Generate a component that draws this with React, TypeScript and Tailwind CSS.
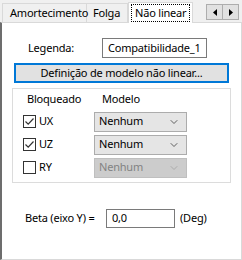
import { ChevronDown } from "lucide-react";

function Check({ checked }: { checked: boolean }) {
  return (
    <span className="w-[13px] h-[13px] border border-[#333333] bg-white flex items-center justify-center">
      {checked && (
        <svg width="11" height="11" viewBox="0 0 11 11">
          <path d="M1.5 5.5 L4.2 8.2 L9.5 2.5" fill="none" stroke="#333" strokeWidth="1.2" />
        </svg>
      )}
    </span>
  );
}

function Select({ disabled }: { disabled?: boolean }) {
  return (
    <div
      className={`w-[93px] h-[20px] border flex items-center justify-between pl-[4px] pr-[6px] ${
        disabled ? "bg-[#cccccc] border-[#bfbfbf] text-[#838383]" : "bg-[#e5e5e5] border-[#acacac] text-black"
      }`}
    >
      <span>Nenhum</span>
      <ChevronDown className={`w-[12px] h-[12px] ${disabled ? "text-[#a0a0a0]" : "text-[#333]"}`} strokeWidth={1.5} />
    </div>
  );
}

function Row({ label, checked, disabled }: { label: string; checked: boolean; disabled?: boolean }) {
  return (
    <div className="flex items-center h-[23px]">
      <div className="w-[81px] flex items-center gap-[3px] pl-[10px]">
        <Check checked={checked} />
        <span>{label}</span>
      </div>
      <Select disabled={disabled} />
    </div>
  );
}

export default function App() {
  return (
    <div className="w-[242px] h-[260px] bg-[#f0f0f0] flex flex-col text-[11px] tracking-[-0.2px] text-black font-['Noto_Sans','Liberation_Sans',sans-serif]">
      {/* Tab strip */}
      <div className="h-[22px] flex items-end pl-[2px] relative">
        <div className="w-[85px] h-[19px] border border-b-0 border-[#d9d9d9] flex items-center pl-[7px]">Amortecimento</div>
        <div className="w-[41px] h-[19px] border border-b-0 border-l-0 border-[#d9d9d9] flex items-center pl-[6px]">Folga</div>
        <div className="w-[65px] h-[21px] -mb-[1px] bg-white border border-b-0 border-[#d9d9d9] px-[2px] pt-[1px] relative z-10">
          <span className="h-[18px] border border-dotted border-black pl-[3px] flex items-center">Não linear</span>
        </div>
        <div className="absolute right-[3px] top-[4px] flex">
          <div className="w-[17px] h-[16px] border border-[#adadad] bg-[#e1e1e1] flex items-center justify-center">
            <svg width="4" height="7" viewBox="0 0 4 7"><path d="M4 0 L0 3.5 L4 7 Z" fill="#000" /></svg>
          </div>
          <div className="w-[16px] h-[16px] border border-l-0 border-[#adadad] bg-[#e1e1e1] flex items-center justify-center">
            <svg width="4" height="7" viewBox="0 0 4 7"><path d="M0 0 L4 3.5 L0 7 Z" fill="#000" /></svg>
          </div>
        </div>
      </div>

      {/* Panel */}
      <div className="flex-1 bg-white border border-[#d9d9d9] border-l-[2px] border-l-[#6d6d6d] flex flex-col">
        <div className="flex items-center mt-[15px] h-[20px]">
          <span className="ml-[26px] w-[74px]">Legenda:</span>
          <div className="w-[105px] h-[20px] border border-[#7a7a7a] flex items-center pl-[5px]">Compatibilidade_1</div>
        </div>
        <div className="mx-[12px] mt-[5px] h-[20px] border-2 border-[#0078d7] bg-[#e1e1e1] flex items-center justify-center">
          Definição de modelo não linear...
        </div>
        <div className="mx-[10px] mt-[5px] h-[95px] border border-[#dcdcdc] flex flex-col">
          <div className="flex h-[21px] items-center">
            <span className="ml-[14px] w-[75px]">Bloqueado</span>
            <span>Modelo</span>
          </div>
          <Row label="UX" checked />
          <Row label="UZ" checked />
          <Row label="RY" checked={false} disabled />
        </div>
        <div className="flex items-center mt-[25px] h-[20px]">
          <span className="ml-[23px] w-[81px]">Beta (eixo Y) =</span>
          <div className="w-[69px] h-[19px] border border-[#7a7a7a] flex items-center pl-[5px]">0,0</div>
          <span className="ml-[5px]">(Deg)</span>
        </div>
      </div>
    </div>
  );
}
